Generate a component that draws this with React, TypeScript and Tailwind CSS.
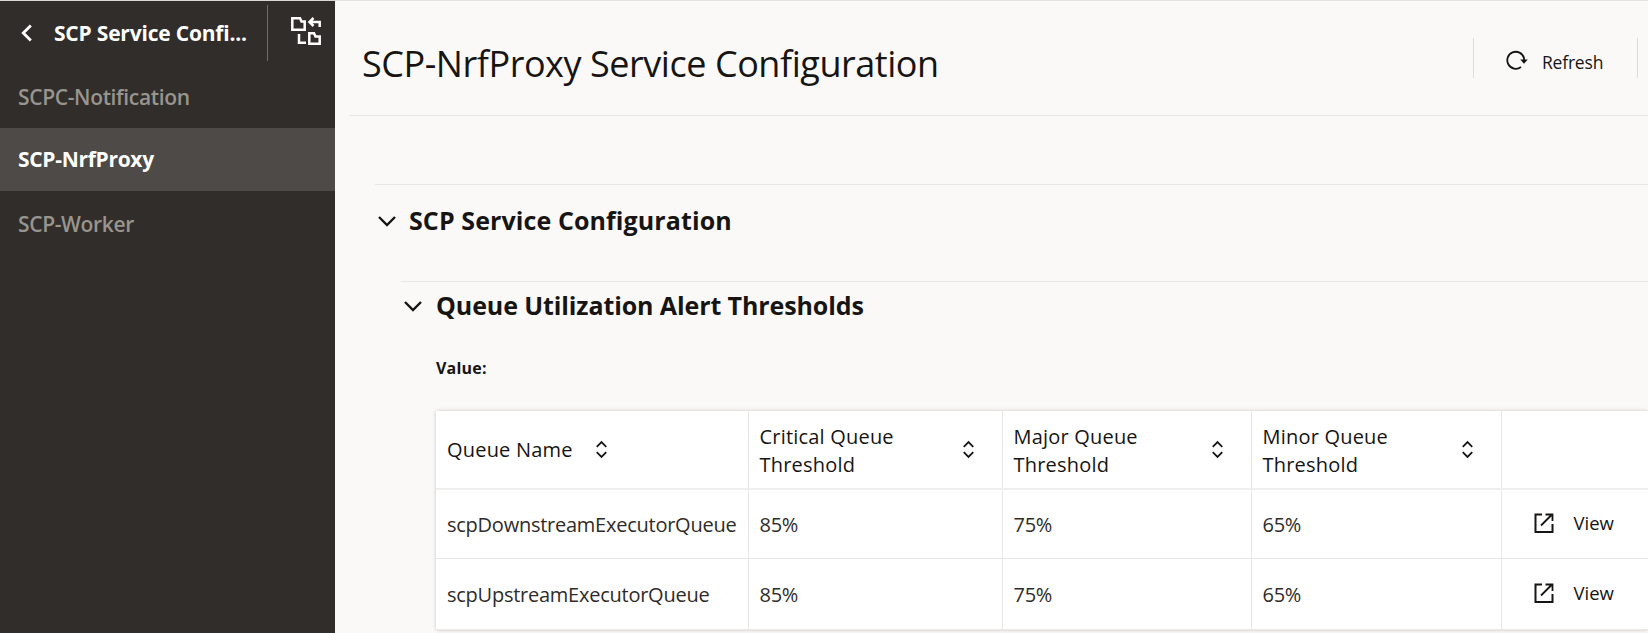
import type { ReactNode } from 'react';

const columns = [
  { label: 'Queue Name', width: 'w-[312px]' },
  { label: 'Critical Queue Threshold', width: 'w-[254px]' },
  { label: 'Major Queue Threshold', width: 'w-[249px]' },
  { label: 'Minor Queue Threshold', width: 'w-[250px]' },
];

const rows = [
  { name: 'scpDownstreamExecutorQueue', critical: '85%', major: '75%', minor: '65%' },
  { name: 'scpUpstreamExecutorQueue', critical: '85%', major: '75%', minor: '65%' },
];

function ChevronDown({ className }: { className?: string }) {
  return (
    <svg viewBox="0 0 20 12" className={className} fill="none" stroke="currentColor" strokeWidth="2.4">
      <path d="M2 2l8 8 8-8" />
    </svg>
  );
}

function SortIcon() {
  return (
    <svg viewBox="0 0 12 18" className="h-[19px] w-[13px] shrink-0 text-[#161513]" fill="none" stroke="currentColor" strokeWidth="1.7">
      <path d="M1.500 6.500L6 2l4.500 4.500M1.500 11.500L6 16l4.500-4.500" />
    </svg>
  );
}

function PanelSwapIcon() {
  return (
    <svg viewBox="0 0 30 28" className="h-7 w-[30px] text-white" fill="none" stroke="currentColor" strokeWidth="2.500">
      <path d="M1.300 1.300H9L10.500 4.500H13.700V12.700H1.300z" />
      <path d="M18.500 5H28.700V10M22.500 1L18.500 5l4 4" />
      <path d="M8 17V25.700H15" />
      <path d="M18.300 16.300H23L24.500 19.500H28.700V26.700H18.300z" />
    </svg>
  );
}

function RefreshIcon() {
  return (
    <svg viewBox="0 0 22 22" className="h-[22px] w-[22px] text-[#161513]" fill="none" stroke="currentColor" strokeWidth="1.800">
      <path d="M15 17A8.500 8.500 0 1 1 18 8V10" />
      <path d="M14.200 9.500H21.800L18 13.800z" fill="currentColor" stroke="none" />
    </svg>
  );
}

function OpenIcon() {
  return (
    <svg viewBox="0 0 20 20" className="h-5 w-5 text-[#161513]" fill="none" stroke="currentColor" strokeWidth="2">
      <path d="M8 1.500H1.500V19H18.500V11" />
      <path d="M7 12.500L18 1.500M11.500 1.500H18.500V8" strokeWidth="1.800" />
    </svg>
  );
}

function NavItem({ active, children }: { active?: boolean; children: ReactNode }) {
  return (
    <div
      className={
        active
          ? 'flex h-[63px] items-center bg-[#4d4a47] pl-[18px] text-[21px] font-bold tracking-[-0.3px] text-white'
          : 'flex h-[64px] items-center pt-[3px] pl-[18px] text-[21px] font-semibold tracking-[-0.35px] text-[#98958f]'
      }
    >
      {children}
    </div>
  );
}

export default function App() {
  return (
    <div className="flex h-[633px] w-[1648px] overflow-hidden bg-[#fbf9f8] font-['Open_Sans',sans-serif] text-[#161513]">
      <aside className="w-[335px] shrink-0 border-t border-[#d9d7d5] bg-[#312d2a]">
        <div className="flex h-[63px] items-center">
          <svg viewBox="0 0 12 18" className="ml-[20px] h-5 w-[13px] text-white" fill="none" stroke="currentColor" strokeWidth="2.600">
            <path d="M10 2L3 9l7 7" />
          </svg>
          <span className="ml-[21px] w-[199px] pt-[2px] text-[21px] font-bold tracking-[-0.2px] whitespace-nowrap text-white">
            SCP Service Confi...
          </span>
          <div className="ml-[14px] h-[56px] w-px bg-[#6f6c69]" />
          <div className="mb-[3px] ml-[23px]">
            <PanelSwapIcon />
          </div>
        </div>
        <NavItem>SCPC-Notification</NavItem>
        <NavItem active>SCP-NrfProxy</NavItem>
        <NavItem>SCP-Worker</NavItem>
      </aside>

      <main className="min-w-0 flex-1 border-t border-[#e4e2e0]">
        <header className="ml-[14px] flex h-[115px] items-center border-b border-[#e9e7e5] pl-[13px]">
          <h1 className="flex-1 pt-[12px] text-[36px] font-normal tracking-[-0.45px] whitespace-nowrap">
            SCP-NrfProxy Service Configuration
          </h1>
          <div className="mt-[-1px] flex h-[40px] w-[165px] items-center border-x border-[#dedcda] pl-[32px]">
            <div className="mt-[7px]">
              <RefreshIcon />
            </div>
            <span className="ml-[14px] pt-[9px] text-[17.500px] tracking-[-0.2px]">Refresh</span>
          </div>
          <div className="w-[10px]" />
        </header>

        <section className="mt-[68px] ml-[40px] border-t border-[#e9e7e5]">
          <div className="flex h-[96px] items-center pb-[24px]">
            <ChevronDown className="ml-[2px] h-3 w-5" />
            <h2 className="ml-[12px] text-[25px] font-bold tracking-[0.1px]">SCP Service Configuration</h2>
          </div>

          <div className="ml-[26px] border-t border-[#e9e7e5]">
            <div className="flex h-[48px] items-center">
              <ChevronDown className="ml-[2px] h-3 w-5" />
              <h3 className="ml-[13px] text-[25px] font-bold tracking-[-0.1px]">Queue Utilization Alert Thresholds</h3>
            </div>
            <p className="mt-[28px] ml-[35px] text-[16px] leading-[20px] font-bold tracking-[0.2px]">Value:</p>

            <table className="mt-[33px] ml-[35px] w-[1212px] table-fixed border-collapse bg-white shadow-[0_0_4px_rgba(0,0,0,0.2)]">
              <thead>
                <tr className="h-[78px] border-b-2 border-[#efeeed]">
                  {columns.map((col) => (
                    <th key={col.label} className={`${col.width} border-r border-[#e9e7e5] pr-3 pl-[11px] text-left text-[20px] leading-[28px] font-medium tracking-[0.2px]`}>
                      <div className={col.label === 'Queue Name' ? 'flex items-center gap-[22px]' : 'flex items-center justify-between pr-[15px]'}>
                        <span className={col.label === 'Queue Name' ? 'whitespace-nowrap' : 'w-[160px] pt-[2px]'}>{col.label}</span>
                        <SortIcon />
                      </div>
                    </th>
                  ))}
                  <th />
                </tr>
              </thead>
              <tbody>
                {rows.map((row, i) => (
                  <tr key={row.name} className={i === 0 ? 'h-[69px] border-b border-[#e9e7e5] text-[20px] tracking-[-0.25px] text-[#2f2c29]' : 'h-[71px] border-b border-[#e9e7e5] text-[20px] tracking-[-0.25px] text-[#2f2c29]'}>
                    <td className="border-r border-[#e9e7e5] pt-[3px] pl-[11px] whitespace-nowrap">{row.name}</td>
                    <td className="border-r border-[#e9e7e5] pt-[3px] pl-[11px]">{row.critical}</td>
                    <td className="border-r border-[#e9e7e5] pt-[3px] pl-[11px]">{row.major}</td>
                    <td className="border-r border-[#e9e7e5] pt-[3px] pl-[11px]">{row.minor}</td>
                    <td className="pb-[2px] pl-[32px]">
                      <div className="flex items-center gap-[20px] text-[18.500px] tracking-normal text-[#161513]">
                        <OpenIcon />
                        View
                      </div>
                    </td>
                  </tr>
                ))}
              </tbody>
            </table>
          </div>
        </section>
      </main>
    </div>
  );
}
